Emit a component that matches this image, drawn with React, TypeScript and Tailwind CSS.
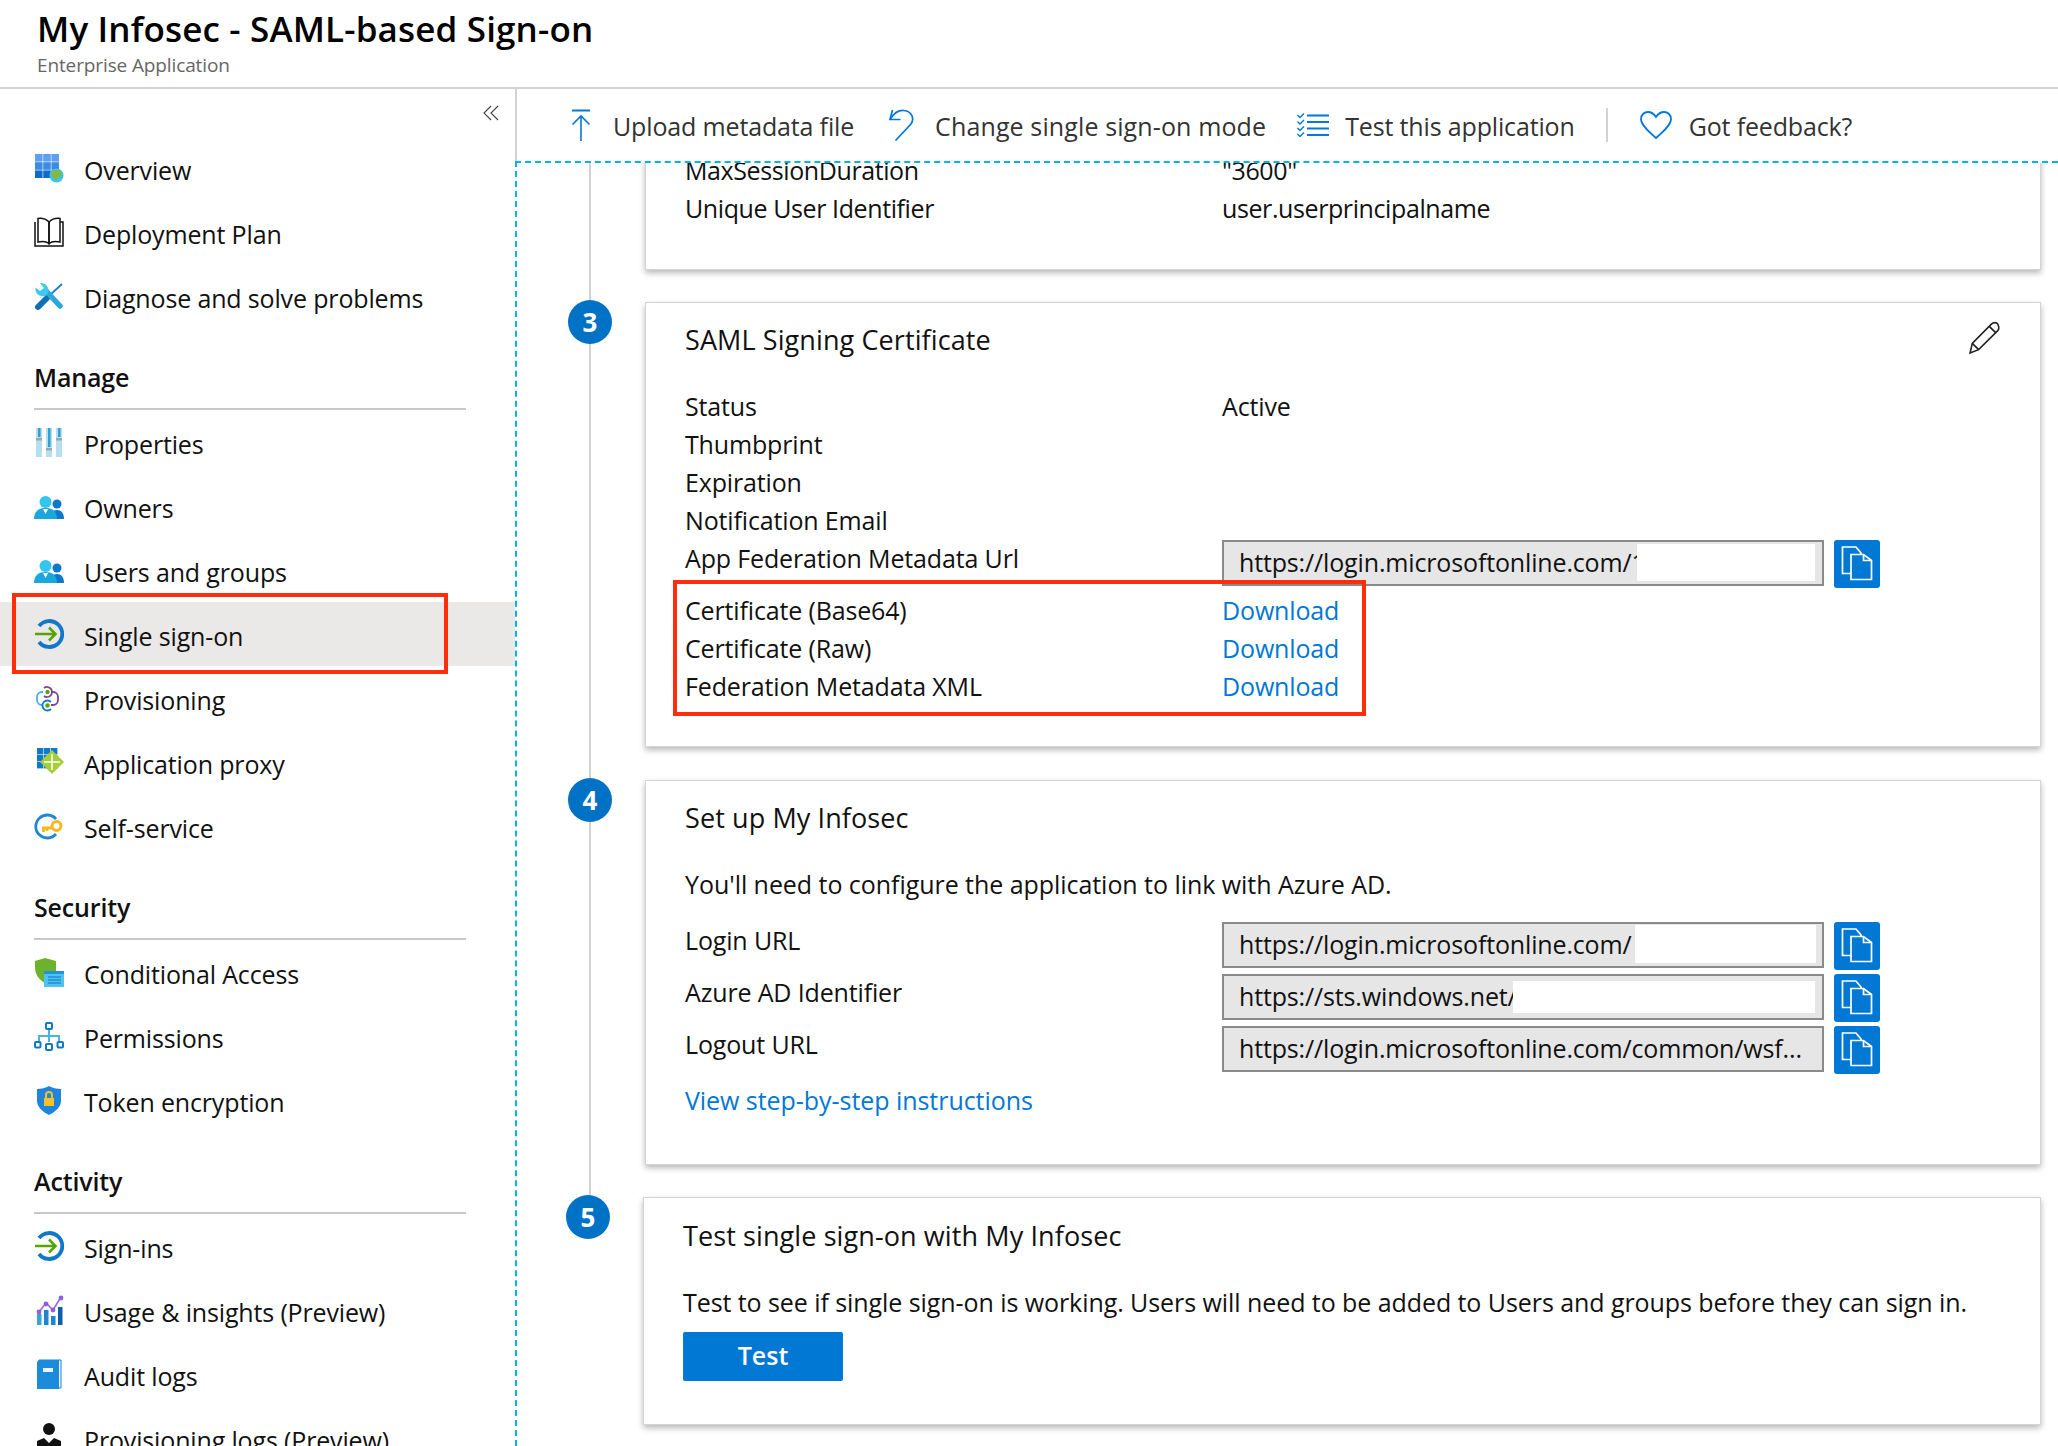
import type { ReactNode } from "react";

const FONT = "font-['Open_Sans','Noto_Sans',sans-serif]";

function Overview() {
  return (
    <svg viewBox="0 0 30 30" className="h-full w-full">
      {[0, 1, 2].map((r) =>
        [0, 1, 2].map((c) => (
          <rect key={`${r}${c}`} x={1 + c * 8.2} y={1 + r * 8.2} width="7.6" height="7.6" fill={r === 0 ? "#5ea0ef" : r === 1 ? "#3b8be0" : "#0f6cc8"} />
        ))
      )}
      <circle cx="22.5" cy="22.5" r="7" fill="#3cc4e8" />
      <path d="M19 18c3-2 7-1 9 2l-2 4-3 1-1 3-2-3-3-2z" fill="#86b83a" />
    </svg>
  );
}

function Book() {
  return (
    <svg viewBox="0 0 30 30" fill="none" stroke="#111" strokeWidth="1.5" className="h-full w-full">
      <path d="M1 5v24h28V5h-3" />
      <path d="M4 1.5v23.5c4-1 8-1 11 1.5V5C12 2 8 1 4 1.5z" />
      <path d="M26 1.5v23.5c-4-1-8-1-11 1.5V5c3-3 7-4 11-3.5z" />
    </svg>
  );
}

function Tools() {
  return (
    <svg viewBox="0 0 30 30" fill="none" className="h-full w-full">
      <path d="M28 3L16 14" stroke="#1b7ec9" strokeWidth="1.8" />
      <path d="M13 17L4 26" stroke="#0f6fb8" strokeWidth="6" strokeLinecap="round" />
      <path d="M13 11l13 14" stroke="#2ea6da" strokeWidth="5.5" strokeLinecap="round" />
      <path d="M6 2a7.5 7.5 0 0 1 8 10l-3 3A7.5 7.5 0 0 1 1.5 6.5L6 10l4-3z" fill="#3cc8ef" />
    </svg>
  );
}

function Sliders() {
  return (
    <svg viewBox="0 0 30 30" className="h-full w-full">
      {[2, 12, 22].map((x, i) => (
        <g key={x}>
          <rect x={x} y="1" width="6" height="29" fill="#b7e0ef" />
          <rect x={x + 2} y="1" width="2.5" height={[9, 19, 9][i]} fill="#2f9fd6" />
          <rect x={x} y={[11, 21, 11][i]} width="6" height="2.5" fill="#9aa7ad" />
        </g>
      ))}
    </svg>
  );
}

function Users() {
  return (
    <svg viewBox="0 -4 30 30" className="h-full w-full">
      <circle cx="23" cy="9" r="4.5" fill="#0f78c9" />
      <path d="M16 24c0-6 3-9 7-9s7 3 7 9z" fill="#0f78c9" />
      <circle cx="11.5" cy="7" r="6" fill="#32c5ee" />
      <path d="M0 24c0-8 5-11 11.5-11S23 16 23 24z" fill="#1ba6dc" />
      <path d="M9 14h5l-2.5 5z" fill="#fff" />
    </svg>
  );
}

function SignIn() {
  return (
    <svg viewBox="0 0 30 30" fill="none" className="h-full w-full">
      <path d="M5 7a13 13 0 1 1 0 16" stroke="#0f78c9" strokeWidth="3.8" />
      <path d="M1 15h20M15 8.5l6.5 6.5-6.5 6.5" stroke="#57a300" strokeWidth="2.6" />
    </svg>
  );
}

function Provisioning() {
  return (
    <svg viewBox="0 0 30 30" fill="none" strokeWidth="1.8" className="h-full w-full">
      <path d="M9 9H8a5 5 0 0 0-5 5v3a5 5 0 0 0 5 5h1" stroke="#45b4e6" />
      <path d="M17 9h2a5 5 0 0 1 5 5v3a5 5 0 0 1-5 5h-2" stroke="#7c3f98" />
      <path d="M10 5a5 5 0 1 1 0 8" stroke="#7c3f98" />
      <path d="M17 19a5 5 0 1 0 0 7" stroke="#0f78c9" />
      <circle cx="13.5" cy="9" r="2.2" fill="#57a300" stroke="none" />
      <circle cx="13.5" cy="22.5" r="2.2" fill="#57a300" stroke="none" />
    </svg>
  );
}

function Proxy() {
  return (
    <svg viewBox="0 0 30 30" className="h-full w-full">
      {[0, 1, 2].map((r) =>
        [0, 1, 2].map((c) => (
          <rect key={`${r}${c}`} x={3 + c * 7} y={1 + r * 7} width="6.4" height="6.4" fill="#0f78c9" />
        ))
      )}
      <path d="M18 3l12 12-12 12L6 15z" fill="#a6ce39" />
      <path d="M18 7v16M10 15h16" stroke="#fff" strokeWidth="1.5" />
    </svg>
  );
}

function Key() {
  return (
    <svg viewBox="0 0 30 30" fill="none" className="h-full w-full">
      <path d="M22 8a11.5 11.5 0 1 0 0 15" stroke="#1b87d6" strokeWidth="2.8" />
      <path d="M8 17h10M9.5 17v4M13 17v3" stroke="#f5b81f" strokeWidth="2.8" />
      <circle cx="22.5" cy="15" r="4.5" stroke="#f5b81f" strokeWidth="3" />
    </svg>
  );
}

function ShieldList() {
  return (
    <svg viewBox="0 0 30 30" className="h-full w-full">
      <path d="M11 1l11 3v10l-8 14C5 23 1 18 1 10V4z" fill="#6db22c" />
      <rect x="10" y="14" width="20" height="16" fill="#4fc3f0" />
      <rect x="10" y="14" width="20" height="3" fill="#1f95dd" />
      <path d="M14 20h13M14 23h13M14 26h13" stroke="#1172c4" strokeWidth="1.2" />
    </svg>
  );
}

function Hierarchy() {
  return (
    <svg viewBox="0 0 30 30" fill="none" className="h-full w-full">
      <path d="M15 9v12M15 15H5v6M15 15h10v6" stroke="#4db4dc" strokeWidth="2" />
      <rect x="12" y="2" width="6" height="6" rx="1" fill="#fff" stroke="#0f78c9" strokeWidth="2" />
      <rect x="1" y="21" width="5.5" height="5.5" rx="1" fill="#fff" stroke="#0f78c9" strokeWidth="2" />
      <rect x="12" y="23" width="6" height="6" rx="1" fill="#fff" stroke="#0f78c9" strokeWidth="2" />
      <rect x="23.5" y="21" width="5.5" height="5.5" rx="1" fill="#fff" stroke="#0f78c9" strokeWidth="2" />
    </svg>
  );
}

function ShieldLock() {
  return (
    <svg viewBox="0 0 30 30" className="h-full w-full">
      <path d="M15 1c3 2 8 3 12 3v12c0 6-6 11-12 14C9 27 3 22 3 16V4c4 0 9-1 12-3z" fill="#1f84dc" />
      <rect x="10" y="13" width="10" height="8" fill="#f7bf26" />
      <path d="M12 13v-3a3 3 0 0 1 6 0v3" fill="none" stroke="#f7bf26" strokeWidth="2" />
    </svg>
  );
}

function Usage() {
  return (
    <svg viewBox="0 0 30 30" className="h-full w-full">
      <rect x="3" y="19" width="4.5" height="11" fill="#35a4e0" />
      <rect x="10" y="15" width="4.5" height="15" fill="#1f84d0" />
      <rect x="17" y="21" width="4.5" height="9" fill="#1f84d0" />
      <rect x="24" y="12" width="4.5" height="18" fill="#0f5fa8" />
      <path d="M5 17l7-9 7 7 8-13" fill="none" stroke="#9a6ae0" strokeWidth="1.6" />
      <circle cx="5" cy="17" r="2.4" fill="#8f5fe0" />
      <circle cx="12" cy="9" r="2.4" fill="#8f5fe0" />
      <circle cx="19" cy="15" r="2.4" fill="#8f5fe0" />
      <circle cx="27" cy="3" r="2.4" fill="#8f5fe0" />
    </svg>
  );
}

function AuditBook() {
  return (
    <svg viewBox="0 0 30 30" className="h-full w-full">
      <path d="M5 1h22v28H5z" fill="#e6f3fb" stroke="#1f84d0" />
      <path d="M3 3l2-2h20v29H3z" fill="#1c8bdc" />
      <rect x="9" y="9" width="10" height="4" fill="#e8f4fb" />
    </svg>
  );
}

function Person() {
  return (
    <svg viewBox="0 0 30 30" className="h-full w-full">
      <circle cx="15" cy="6" r="6" fill="#111" />
      <path d="M3 30V18l7-3 5 5 5-5 7 3v12z" fill="#111" />
    </svg>
  );
}

function NavItem({ icon, label, active }: { icon: ReactNode; label: string; active?: boolean }) {
  return (
    <div className={`flex h-16 items-center pl-[34px] ${active ? "-mt-[3px] mb-[3px] bg-[#ebe9e7] pt-[6px]" : ""}`}>
      <div className="-mt-[6px] h-[30px] w-[30px] shrink-0">{icon}</div>
      <span className="ml-5 whitespace-nowrap text-[25px] tracking-[-0.15px] text-[#111]">{label}</span>
    </div>
  );
}

function NavSection({ title }: { title: string }) {
  return (
    <div className="mx-[34px] mb-[3px] mt-[16px] flex h-[63px] w-[432px] items-center border-b-2 border-[#c8c8c8] text-[25px] font-semibold tracking-[-0.15px] text-[#111]">
      {title}
    </div>
  );
}

function Field({ label, value, link, spacing = "tracking-[-0.15px]" }: { label: string; value?: string; link?: boolean; spacing?: string }) {
  return (
    <div className={`flex h-[38px] items-center text-[25px] text-[#111] ${spacing}`}>
      <span className="w-[537px] shrink-0 whitespace-nowrap">{label}</span>
      {value && <span className={link ? "text-[#0078d4]" : ""}>{value}</span>}
    </div>
  );
}

function Heading({ children }: { children: ReactNode }) {
  return <div className="h-[40px] text-[27px] leading-[40px] tracking-[0.1px] text-[#111]">{children}</div>;
}

function CopyIcon() {
  return (
    <svg viewBox="0 0 46 48" fill="none" stroke="#fff" strokeWidth="1.7" className="h-[48px] w-[46px]">
      <path d="M8.5 7H22l5 6v20.5H8.5z" />
      <path d="M17 14.5h12.5l8 6V39.5H17z" fill="#0078d4" />
      <path d="M29.5 14.5v6h8" />
    </svg>
  );
}

function CopyField({ value, mask }: { value: string; mask?: string }) {
  return (
    <div className="flex items-start">
      <div className="relative flex h-[46px] w-[602px] items-center overflow-hidden border-2 border-[#8a8a8a] bg-[#e6e6e6] pl-[15px] text-[25px] tracking-[-0.15px] text-[#111]">
        <span className="whitespace-nowrap">{value}</span>
        {mask && <div className={`absolute bg-white ${mask}`} />}
      </div>
      <div className="ml-[10px] flex h-[48px] w-[46px] items-center justify-center rounded-[3px] bg-[#0078d4]">
        <CopyIcon />
      </div>
    </div>
  );
}

function Step({ n, children, className }: { n?: number; children: ReactNode; className: string }) {
  return (
    <div className={`flex ${className}`}>
      <div className="w-[44px] shrink-0">
        {n && (
          <div className="mt-[-2px] flex h-[44px] w-[44px] items-center justify-center rounded-full bg-[#0072c6] text-[26px] font-bold text-white">
            {n}
          </div>
        )}
      </div>
      <div className="ml-[33px] flex-1 border border-[#d4d4d4] bg-white pl-[39px] shadow-[0_3px_6px_rgba(0,0,0,0.28)]">
        {children}
      </div>
    </div>
  );
}

export default function App() {
  return (
    <div className={`${FONT} flex h-[1446px] w-[2058px] flex-col overflow-hidden bg-white`}>
      <div className="h-[89px] shrink-0 border-b-2 border-[#d2d2d2] pl-[37px] pt-[5px]">
        <div className="text-[35px] font-semibold leading-[48px] tracking-[0.15px] text-black">My Infosec - SAML-based Sign-on</div>
        <div className="text-[19px] leading-[24px] tracking-[-0.12px] text-[#666]">Enterprise Application</div>
      </div>
      <div className="flex min-h-0 flex-1">
        <div className="w-[515px] shrink-0">
          <div className="flex h-[50px] justify-end pr-[16px] pt-[16px]">
            <svg viewBox="0 0 16 16" fill="none" stroke="#444" strokeWidth="1.1" className="h-[16px] w-[16px]">
              <path d="M8 1L1 8l7 7M15 1L8 8l7 7" />
            </svg>
          </div>
          <NavItem icon={<Overview />} label="Overview" />
          <NavItem icon={<Book />} label="Deployment Plan" />
          <NavItem icon={<Tools />} label="Diagnose and solve problems" />
          <NavSection title="Manage" />
          <NavItem icon={<Sliders />} label="Properties" />
          <NavItem icon={<Users />} label="Owners" />
          <NavItem icon={<Users />} label="Users and groups" />
          <NavItem icon={<SignIn />} label="Single sign-on" active />
          <NavItem icon={<Provisioning />} label="Provisioning" />
          <NavItem icon={<Proxy />} label="Application proxy" />
          <NavItem icon={<Key />} label="Self-service" />
          <NavSection title="Security" />
          <NavItem icon={<ShieldList />} label="Conditional Access" />
          <NavItem icon={<Hierarchy />} label="Permissions" />
          <NavItem icon={<ShieldLock />} label="Token encryption" />
          <NavSection title="Activity" />
          <NavItem icon={<SignIn />} label="Sign-ins" />
          <NavItem icon={<Usage />} label="Usage & insights (Preview)" />
          <NavItem icon={<AuditBook />} label="Audit logs" />
          <NavItem icon={<Person />} label="Provisioning logs (Preview)" />
        </div>
        <div className="flex min-w-0 flex-1 flex-col">
          <div className="flex h-[72px] shrink-0 items-center border-l-2 border-[#d2d2d2] pl-[54px] pt-[3px] text-[25px] tracking-[-0.15px] text-[#333]">
            <svg viewBox="0 0 20 32" fill="none" stroke="#0078d4" strokeWidth="1.6" className="-mt-[3px] h-[32px] w-[20px]">
              <path d="M1 1.5h18" strokeWidth="2" />
              <path d="M10 32V8M1.5 15.5L10 7l8.5 8.5" />
            </svg>
            <span className="ml-[22px] whitespace-nowrap">Upload metadata file</span>
            <svg viewBox="0 0 26 32" fill="none" stroke="#0078d4" strokeWidth="1.7" className="-mt-[3px] ml-[35px] h-[32px] w-[26px]">
              <path d="M3.5 1L1 10.5h10.5" />
              <path d="M1 10.5C5 4 10 1 15 1.5C22 2 26 9 22 15L6.5 31.5" />
            </svg>
            <span className="ml-[20px] whitespace-nowrap tracking-[0.12px]">Change single sign-on mode</span>
            <svg viewBox="0 0 32 24" fill="none" stroke="#0078d4" strokeWidth="2" className="-mt-[3px] ml-[31px] h-[24px] w-[32px]">
              <path d="M10 2.5h22M10 9h22M10 15.5h22M10 22h22" />
              <path d="M0.5 2l2.5 2.5L7 0.5M0.5 8.5L3 11l4-4M0.5 15L3 17.5l4-4M0.5 21L3 23.5l4-4" strokeWidth="1.4" />
            </svg>
            <span className="ml-[16px] whitespace-nowrap">Test this application</span>
            <div className="-mt-[3px] ml-[31px] h-[34px] w-[2px] bg-[#d2d2d2]" />
            <svg viewBox="0 0 34 30" fill="none" stroke="#0078d4" strokeWidth="1.8" className="-mt-[3px] ml-[31px] h-[30px] w-[34px]">
              <path d="M17 28C10 22 2 15 2 9c0-4 3-7 7-7 3 0 6 2 8 5 2-3 5-5 8-5 4 0 7 3 7 7 0 6-8 13-15 19z" />
            </svg>
            <span className="ml-[16px] whitespace-nowrap">Got feedback?</span>
          </div>
          <div className="relative min-h-0 flex-1 overflow-hidden border-l-2 border-t-2 border-dashed border-[#00b4e6]">
            {/* timeline behind the step badges */}
            <div className="absolute left-[72px] top-0 h-[1036px] w-[2px] bg-[#d2d2d2]" />
            <div className="relative pl-[51px] pr-[17px]">
              <Step className="-mt-[40px]">
                <div className="h-[145px] pt-[28px]">
                  <Field label="MaxSessionDuration" value={'"3600"'} spacing="tracking-[-0.4px]" />
                  <Field label="Unique User Identifier" value="user.userprincipalname" spacing="tracking-[-0.4px]" />
                </div>
              </Step>
              <Step n={3} className="mt-[32px]">
                <div className="relative h-[443px] pt-[17px]">
                  <div className="mb-[28px]">
                    <Heading>SAML Signing Certificate</Heading>
                  </div>
                  <svg viewBox="0 0 32 32" fill="none" stroke="#222" strokeWidth="1.5" className="absolute right-[38px] top-[18px] h-[34px] w-[34px]">
                    <path d="M2 30l2-9L22 3c2-2 5-2 6 0s2 4 0 6L10 27z" />
                    <path d="M4 21l6 6M20 5l6 6" />
                  </svg>
                  <Field label="Status" value="Active" />
                  <Field label="Thumbprint" />
                  <Field label="Expiration" />
                  <Field label="Notification Email" />
                  <div className="flex">
                    <div className="w-[537px]">
                      <Field label="App Federation Metadata Url" />
                    </div>
                    <CopyField value="https://login.microsoftonline.com/1" mask="left-[413px] top-[2px] h-[37px] w-[178px]" />
                  </div>
                  <div className="mt-[4px]">
                    <Field label="Certificate (Base64)" value="Download" link />
                    <Field label="Certificate (Raw)" value="Download" link />
                    <Field label="Federation Metadata XML" value="Download" link />
                  </div>
                </div>
              </Step>
              <Step n={4} className="mt-[33px]">
                <div className="h-[383px] pt-[17px]">
                  <div className="mb-[28px]">
                    <Heading>Set up My Infosec</Heading>
                  </div>
                  <Field label="You'll need to configure the application to link with Azure AD." spacing="tracking-[-0.05px]" />
                  <div className="mt-[18px] flex flex-col gap-[4px]">
                    {[
                      { label: "Login URL", value: "https://login.microsoftonline.com/", mask: "left-[411px] top-[1px] h-[38px] w-[181px]" },
                      { label: "Azure AD Identifier", value: "https://sts.windows.net/", mask: "left-[289px] top-[5px] h-[32px] w-[302px]" },
                      { label: "Logout URL", value: "https://login.microsoftonline.com/common/wsf..." },
                    ].map((row) => (
                      <div key={row.label} className="flex">
                        <div className="-mt-[1px] w-[537px] text-[25px] leading-[38px] tracking-[-0.15px] text-[#111]">{row.label}</div>
                        <CopyField value={row.value} mask={row.mask} />
                      </div>
                    ))}
                  </div>
                  <div className="mt-[7px] text-[25px] leading-[38px] tracking-[-0.05px] text-[#0078d4]">View step-by-step instructions</div>
                </div>
              </Step>
              <Step n={5} className="-ml-[2px] mt-[32px]">
                <div className="h-[226px] pt-[18px]">
                  <div className="mb-[28px]">
                    <Heading>Test single sign-on with My Infosec</Heading>
                  </div>
                  <Field label="Test to see if single sign-on is working. Users will need to be added to Users and groups before they can sign in." spacing="tracking-[-0.07px]" />
                  <div className="mt-[10px] flex h-[49px] w-[160px] items-center justify-center rounded-[2px] bg-[#0078d4] pb-[2px] text-[25px] font-semibold text-white">Test</div>
                </div>
              </Step>
            </div>
          </div>
        </div>
      </div>
      {/* red annotation boxes */}
      <div className="absolute left-[12px] top-[593px] h-[81px] w-[436px] border-4 border-[#ff2d0a]" />
      <div className="absolute left-[673px] top-[580px] h-[136px] w-[693px] border-4 border-[#ff2d0a]" />
    </div>
  );
}
